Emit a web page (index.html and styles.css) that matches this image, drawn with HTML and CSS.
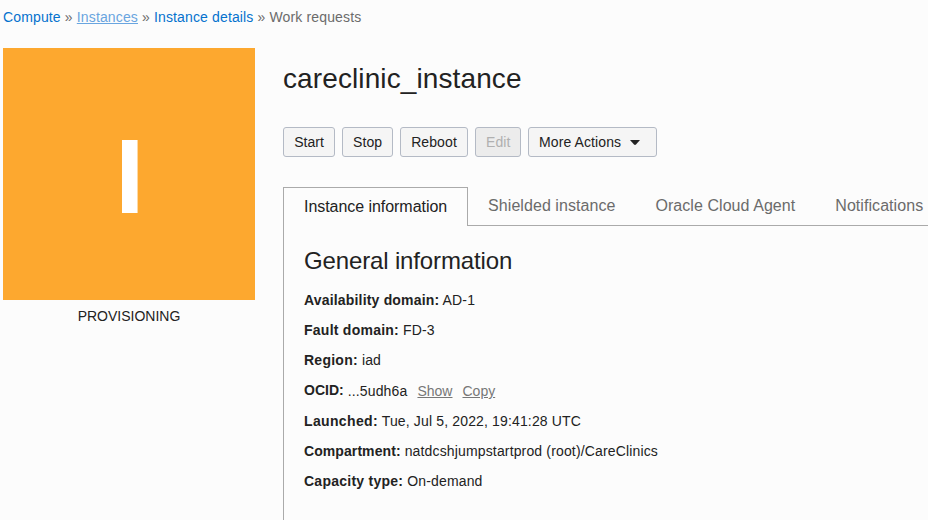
FILE: index.html
```html
<!DOCTYPE html>
<html lang="en">
<head>
<meta charset="utf-8">
<title>careclinic_instance</title>
<link rel="stylesheet" href="styles.css">
</head>
<body>
<nav class="breadcrumb"><a href="#">Compute</a> » <a href="#" class="hovered">Instances</a> » <a href="#">Instance details</a> » <span>Work requests</span></nav>
<main class="page">
  <aside class="status">
    <div class="tile"><span class="bar"></span></div>
    <p class="state">PROVISIONING</p>
  </aside>
  <section class="content">
    <h1>careclinic_instance</h1>
    <div class="actions">
      <button class="start">Start</button>
      <button class="stop">Stop</button>
      <button class="reboot">Reboot</button>
      <button class="edit" disabled>Edit</button>
      <button class="more">More Actions <svg width="10" height="5" viewBox="0 0 10 5"><path d="M0 0h10L6 4.6Q5 5.3 4 4.6z" fill="#222"/></svg></button>
    </div>
    <div class="tabs">
      <a class="tab active">Instance information</a>
      <a class="tab">Shielded instance</a>
      <a class="tab">Oracle Cloud Agent</a>
      <a class="tab">Notifications</a>
    </div>
    <div class="panel">
      <h2>General information</h2>
      <p><b>Availability domain:</b> AD-1</p>
      <p><b class="wide">Fault domain:</b> FD-3</p>
      <p><b class="wide">Region:</b> iad</p>
      <p class="ocid"><b class="normal">OCID:</b> <span class="value">...5udh6a <a href="#">Show</a><a href="#">Copy</a></span></p>
      <p><b class="wider">Launched:</b> Tue, Jul 5, 2022, 19:41:28 UTC</p>
      <p><b class="tight">Compartment:</b> natdcshjumpstartprod (root)/CareClinics</p>
      <p><b class="wide">Capacity type:</b> On-demand</p>
    </div>
  </section>
</main>
</body>
</html>
```
FILE: styles.css
```css
* { box-sizing: border-box; }
body { margin: 0; width: 928px; height: 520px; overflow: hidden; background: #fcfcfc; color: #222; font: 14px/20px "Liberation Sans", Arial, sans-serif; }
h1, h2, p { margin: 0; font-weight: 400; }
.breadcrumb { padding: 7px 3px 0; height: 48px; color: #6b6b6b; white-space: nowrap; letter-spacing: .14px; }
.breadcrumb a { color: #0572ce; text-decoration: none; }
.breadcrumb .hovered { color: #69a5e0; text-decoration: underline; }
.page { display: flex; gap: 28px; padding-left: 3px; height: 472px; }
.status { flex: 0 0 252px; }
.tile { height: 252px; background: #fda82f; padding: 92px 0 0 119px; }
.bar { display: block; width: 15px; height: 73px; background: #fff; box-shadow: 1px 0 #fed9a3; }
.state { text-align: center; padding-top: 6px; }
.content { flex: 0 0 660px; display: flex; flex-direction: column; }
h1 { font-size: 28px; line-height: 32px; padding-top: 15px; height: 79px; letter-spacing: .11px; }
.actions { display: flex; gap: 7px; height: 60px; }
button { flex: none; height: 30px; padding: 0 10px; border: 1px solid #b4bac5; border-radius: 3px; background: #f5f5f5; color: #222; font: inherit; letter-spacing: .1px; white-space: nowrap; }
button:disabled { background: #ececec; color: #b0b0b0; }
.start { width: 52px; letter-spacing: 0; }
.stop { width: 51px; }
.reboot { width: 68px; }
.edit { width: 46px; }
.more { display: flex; align-items: center; width: 129px; letter-spacing: .1px; }
.more svg { margin-left: 9px; }
.tabs { display: flex; height: 39px; font-size: 16px; }
.tab { padding: 9px 20px 0; border-bottom: 1px solid #aaa; color: #6b6b6b; white-space: nowrap; letter-spacing: .06px; }
.tab.active { flex: 0 0 185px; border: 1px solid #aaa; border-bottom: 0; color: #222; letter-spacing: -.05px; }
.panel { flex: 1; border-left: 1px solid #aaa; padding: 19px 20px 0; }
h2 { font-size: 24px; line-height: 32px; margin-bottom: 13px; letter-spacing: -.14px; }
.panel p { height: 20px; margin-bottom: 10px; white-space: nowrap; letter-spacing: .15px; }
.panel b { letter-spacing: .18px; }
.panel .wide { letter-spacing: .25px; }
.panel .wider { letter-spacing: .35px; }
.panel .tight { letter-spacing: .08px; }
.panel .normal { letter-spacing: 0; }
.panel .ocid { display: flex; gap: 4px; margin-bottom: 11px; }
.value { padding-top: 1px; }
.value a { color: #777; margin-left: 6px; letter-spacing: 0; }
.value a + a { margin-left: 10px; }
```
